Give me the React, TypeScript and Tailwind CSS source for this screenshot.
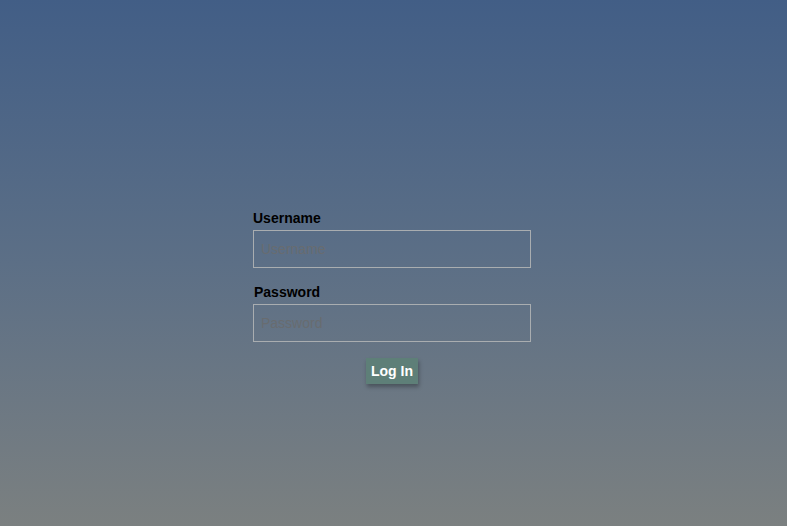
import React from "react";

const App = () => {
  return (
    <div
      className="min-h-[526px] w-full bg-gradient-to-b from-[#425e86] via-[#5c6f86] to-[#7b8080] flex justify-center"
      style={{ fontFamily: '"Liberation Sans", Arial, sans-serif' }}
    >
      <form
        className="w-[278px] mr-[3px] mt-[210px] flex flex-col"
        onSubmit={(e) => e.preventDefault()}
      >
        <label htmlFor="username" className="text-[14px] font-bold text-black leading-[17px]">
          Username
        </label>
        <input
          id="username"
          type="text"
          placeholder="Username"
          className="mt-[3px] h-[38px] w-full border border-[#a9adb0] bg-transparent px-[7px] text-[14px] text-black placeholder:text-[#686c70] outline-none"
        />
        <label htmlFor="password" className="mt-[16px] ml-px text-[14px] font-bold text-black leading-[17px]">
          Password
        </label>
        <input
          id="password"
          type="password"
          placeholder="Password"
          className="mt-[3px] h-[38px] w-full border border-[#a9adb0] bg-transparent px-[7px] text-[14px] text-black placeholder:text-[#686c70] outline-none"
        />
        <div className="flex justify-center mt-[16px]">
          <button
            type="submit"
            className="h-[26px] px-[5px] bg-[#5e7f78] text-white text-[14px] font-bold shadow-[1px_3px_4px_rgba(0,0,0,0.3)]"
          >
            Log In
          </button>
        </div>
      </form>
    </div>
  );
};

export default App;
